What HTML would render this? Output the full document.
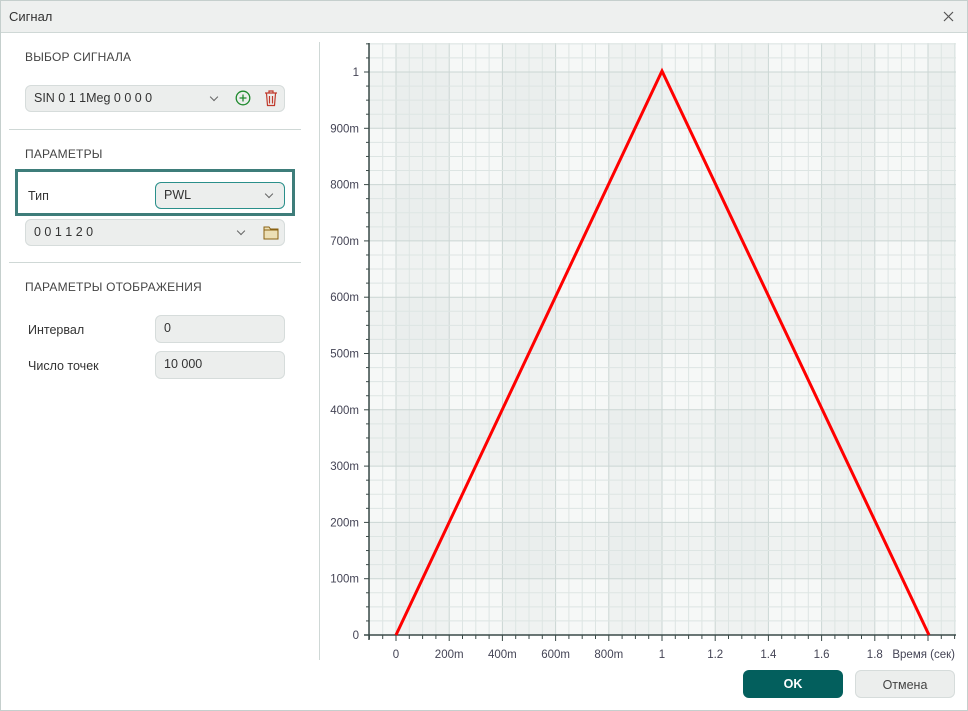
<!DOCTYPE html>
<html><head><meta charset="utf-8"><style>
*{box-sizing:border-box;margin:0;padding:0}
body{width:968px;height:711px;background:#fff;font-family:"Liberation Sans",sans-serif;color:#333;position:relative;overflow:hidden}
.win{position:absolute;left:0;top:0;width:968px;height:711px;border:1px solid #c5cfcd}
.title{position:absolute;left:1px;top:1px;width:966px;height:32px;background:#eef0ef;border-bottom:1px solid #cfd8d6;font-size:13px;line-height:32px;padding-left:8px;color:#333}
.h{position:absolute;left:25px;font-size:12px;color:#444;letter-spacing:.2px}
.sep{position:absolute;left:9px;width:292px;height:1px;background:#cfd8d6}
.box{position:absolute;background:#eceeed;border:1px solid #d6dcdb;border-radius:6px;font-size:12.5px;color:#333;padding-left:8px;line-height:24px}
.lbl{position:absolute;font-size:12.5px;color:#333}
.chev{position:absolute;width:6px;height:6px;border-right:1.2px solid #666;border-bottom:1.2px solid #666;transform:rotate(45deg)}
.btn{position:absolute;top:670px;height:28px;border-radius:6px;font-size:12.5px;text-align:center;line-height:28px}
</style></head><body>
<div class="win"></div>
<div class="title">Сигнал</div>
<svg style="position:absolute;left:943px;top:11px" width="11" height="11"><path d="M1 1l9 9M10 1l-9 9" stroke="#555" stroke-width="1.2"/></svg>
<div style="position:absolute;left:319px;top:42px;width:1px;height:618px;background:#cfd8d6"></div>
<div class="h" style="top:50px">ВЫБОР СИГНАЛА</div>
<div class="box" style="left:25px;top:85px;width:260px;height:27px">SIN 0 1 1Meg 0 0 0 0</div>
<div class="chev" style="left:211px;top:94px"></div>
<svg style="position:absolute;left:235px;top:90px" width="16" height="16"><circle cx="8" cy="8" r="6.8" fill="none" stroke="#1f8a2e" stroke-width="1.3"/><path d="M8 4.5v7M4.5 8h7" stroke="#1f8a2e" stroke-width="1.3"/></svg>
<svg style="position:absolute;left:263px;top:89px" width="16" height="18"><path d="M2 4h12M6 4V2h4v2M3.5 4.5l1 12h7l1-12M6.5 7v7.5M9.5 7v7.5" fill="none" stroke="#c0392b" stroke-width="1.2"/></svg>
<div class="sep" style="top:129px"></div>
<div class="h" style="top:147px">ПАРАМЕТРЫ</div>
<div style="position:absolute;left:15px;top:169px;width:280px;height:47px;border:3px solid #3e7d7a"></div>
<div class="lbl" style="left:28px;top:189px">Тип</div>
<div class="box" style="left:155px;top:182px;width:130px;height:27px;border-color:#2a8f8a">PWL</div>
<div class="chev" style="left:266px;top:191px"></div>
<div class="box" style="left:25px;top:219px;width:260px;height:27px">0 0 1 1 2 0</div>
<div class="chev" style="left:238px;top:228px"></div>
<svg style="position:absolute;left:263px;top:225px" width="16" height="15"><path d="M1 2h5l1.5 2H15v10H1z" fill="#ecdfb6" stroke="#8a6212" stroke-width="1"/><path d="M1 5h14" stroke="#8a6212"/></svg>
<div class="sep" style="top:262px"></div>
<div class="h" style="top:280px">ПАРАМЕТРЫ ОТОБРАЖЕНИЯ</div>
<div class="lbl" style="left:28px;top:323px">Интервал</div>
<div class="box" style="left:155px;top:315px;width:130px;height:28px">0</div>
<div class="lbl" style="left:28px;top:359px">Число точек</div>
<div class="box" style="left:155px;top:351px;width:130px;height:28px">10 000</div>
<svg id="p" style="position:absolute;left:0;top:0" width="968" height="711"></svg>
<div class="btn" style="left:743px;width:100px;background:#035f5d;color:#fff;font-weight:bold">OK</div>
<div class="btn" style="left:855px;width:100px;background:#eceeed;border:1px solid #d6dcdb;color:#444">Отмена</div>
<script>
var s='',L=369,R=956,T=43,B=635,x0=396,ux=266,y0=635,uy=563;
s+='<rect x="'+L+'" y="'+T+'" width="'+(R-L)+'" height="'+(B-T)+'" fill="#f6f8f7"/>';
for(var i=-1;i<11;i++){if(i%2==0){var a=Math.max(L,x0+i*53.2),b=Math.min(R,x0+(i+1)*53.2);s+='<rect x="'+a+'" y="'+T+'" width="'+(b-a)+'" height="'+(B-T)+'" fill="#dfe6e5" opacity=".3"/>';}}
for(var j=0;j<11;j++){if(j%2==0){var a=Math.max(T,y0-uy*(1-j*0.1)),b=Math.min(B,y0-uy*(0.9-j*0.1));s+='<rect x="'+L+'" y="'+a+'" width="'+(R-L)+'" height="'+(b-a)+'" fill="#dfe6e5" opacity=".3"/>';}}
for(var k=-2;k<=42;k++){var x=x0+k*ux/20;if(x>L&&x<R)s+='<line x1="'+x+'" x2="'+x+'" y1="'+T+'" y2="'+B+'" stroke="'+(k%4==0?'#cbd6d4':'#dde5e3')+'" stroke-width="1"/>';}
for(var k=0;k<=42;k++){var y=y0-k*uy/40;if(y>T&&y<B)s+='<line x1="'+L+'" x2="'+R+'" y1="'+y+'" y2="'+y+'" stroke="'+(k%4==0?'#cbd6d4':'#dde5e3')+'" stroke-width="1"/>';}
s+='<line x1="'+L+'" x2="'+L+'" y1="'+T+'" y2="'+(B+5)+'" stroke="#3a4a48" stroke-width="1.5"/>';
s+='<line x1="'+(L-5)+'" x2="'+R+'" y1="'+B+'" y2="'+B+'" stroke="#3a4a48" stroke-width="1.5"/>';
for(var k=0;k<=42;k++){var y=y0-k*uy/40;if(y>=T)s+='<line x1="'+(L-(k%4==0?5:3))+'" x2="'+L+'" y1="'+y+'" y2="'+y+'" stroke="#3a4a48"/>';}
for(var k=-2;k<=42;k++){var x=x0+k*ux/20;if(x>=L&&x<=R)s+='<line x1="'+x+'" x2="'+x+'" y1="'+B+'" y2="'+(B+(k%4==0?6:4))+'" stroke="#3a4a48"/>';}
var yl=['0','100m','200m','300m','400m','500m','600m','700m','800m','900m','1'];
for(var j=0;j<=10;j++)s+='<text x="359" y="'+(y0-uy*j/10+4)+'" text-anchor="end" font-size="11.5" fill="#445" font-family="Liberation Sans">'+yl[j]+'</text>';
var xl=['0','200m','400m','600m','800m','1','1.2','1.4','1.6','1.8'];
for(var j=0;j<10;j++)s+='<text x="'+(x0+j*53.2)+'" y="658" text-anchor="middle" font-size="11.5" fill="#445" font-family="Liberation Sans">'+xl[j]+'</text>';
s+='<text x="955" y="658" text-anchor="end" font-size="11.5" fill="#445" font-family="Liberation Sans">Время (сек)</text>';
s+='<polyline points="396,635 662,71 929,635" fill="none" stroke="#f00" stroke-width="3"/>';
document.getElementById('p').innerHTML=s;
</script>
</body></html>
